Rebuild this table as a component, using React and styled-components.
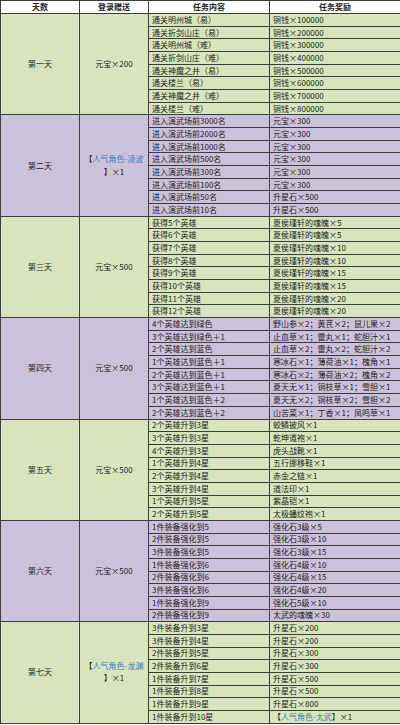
import React from "react";
import styled, { createGlobalStyle } from "styled-components";

const Global = createGlobalStyle`
  html, body { margin: 0; padding: 0; background: #ffffff; }
  body { font-family: "Noto Sans CJK SC", "Liberation Sans", sans-serif; }
`;

const TONES = {
  green: "#d7e4bd",
  purple: "#ccc1da",
  white: "#ffffff",
};

const Table = styled.div`
  display: grid;
  width: 400px;
  box-sizing: border-box;
  grid-template-columns: 79px 69px 121px 131px;
  grid-template-rows: 13px;
  grid-auto-rows: 12.68px;
  border-left: 1px solid #3c3c3c;
  border-top: 1px solid #3c3c3c;
  font-size: 8px;
  color: #1c1c1c;
`;

const Cell = styled.div`
  box-sizing: border-box;
  border-right: 1px solid #3c3c3c;
  border-bottom: 1px solid #3c3c3c;
  background: ${(p) => TONES[p.$tone || "white"]};
  display: flex;
  align-items: center;
  white-space: nowrap;
  overflow: hidden;
  line-height: 1;
`;

const HeadCell = styled(Cell)`
  justify-content: center;
  font-weight: 700;
  color: #222;
`;

const SpanCell = styled(Cell)`
  grid-row: span ${(p) => p.$span};
  grid-column: ${(p) => p.$col};
  justify-content: center;
  text-align: center;
`;

const Lines = styled.div`
  display: block;
  line-height: 12.5px;
  white-space: nowrap;
  text-align: center;
`;

const TextCell = styled(Cell)`
  padding-left: 3px;
`;

const Blue = styled.span`
  color: #3a7dc4;
`;

const Role = ({ name }) => (
  <span>
    【<Blue>人气角色-{name}</Blue>】×1
  </span>
);

const RoleWrapped = ({ name }) => (
  <Lines>
    【<Blue>人气角色-{name}</Blue>
    <br />】×1
  </Lines>
);

const days = [
  {
    label: "第一天",
    tone: "green",
    gift: "元宝×200",
    rows: [
      ["通关明州城（易）", "铜钱×100000"],
      ["通关折剑山庄（易）", "铜钱×200000"],
      ["通关明州城（难）", "铜钱×300000"],
      ["通关折剑山庄（难）", "铜钱×400000"],
      ["通关神魔之井（易）", "铜钱×500000"],
      ["通关楼兰（易）", "铜钱×600000"],
      ["通关神魔之井（难）", "铜钱×700000"],
      ["通关楼兰（难）", "铜钱×800000"],
    ],
  },
  {
    label: "第二天",
    tone: "purple",
    gift: <RoleWrapped name="凌波" />,
    rows: [
      ["进入演武场前3000名", "元宝×300"],
      ["进入演武场前2000名", "元宝×300"],
      ["进入演武场前1000名", "元宝×300"],
      ["进入演武场前500名", "元宝×300"],
      ["进入演武场前300名", "元宝×300"],
      ["进入演武场前100名", "元宝×300"],
      ["进入演武场前50名", "升星石×500"],
      ["进入演武场前10名", "升星石×500"],
    ],
  },
  {
    label: "第三天",
    tone: "green",
    gift: "元宝×500",
    rows: [
      ["获得5个英雄", "夏侯瑾轩的魂魄×5"],
      ["获得6个英雄", "夏侯瑾轩的魂魄×5"],
      ["获得7个英雄", "夏侯瑾轩的魂魄×10"],
      ["获得8个英雄", "夏侯瑾轩的魂魄×10"],
      ["获得9个英雄", "夏侯瑾轩的魂魄×15"],
      ["获得10个英雄", "夏侯瑾轩的魂魄×15"],
      ["获得11个英雄", "夏侯瑾轩的魂魄×20"],
      ["获得12个英雄", "夏侯瑾轩的魂魄×20"],
    ],
  },
  {
    label: "第四天",
    tone: "purple",
    gift: "元宝×500",
    rows: [
      ["4个英雄达到绿色", "野山参×2；黄芪×2；鼠儿果×2"],
      ["3个英雄达到绿色＋1", "止血草×1；雷丸×1；蛇胆汁×1"],
      ["2个英雄达到蓝色", "止血草×2；雷丸×2；蛇胆汁×2"],
      ["1个英雄达到蓝色＋1", "寒冰石×1；薄荷油×1；槐角×1"],
      ["2个英雄达到蓝色＋1", "寒冰石×2；薄荷油×2；槐角×2"],
      ["3个英雄达到蓝色＋1", "夏天无×1；铜枝草×1；雪胆×1"],
      ["1个英雄达到蓝色＋2", "夏天无×2；铜枝草×2；雪胆×2"],
      ["2个英雄达到蓝色＋2", "山苦菜×1；丁香×1；凤鸣草×1"],
    ],
  },
  {
    label: "第五天",
    tone: "green",
    gift: "元宝×500",
    rows: [
      ["2个英雄升到3星", "蛟鳞披风×1"],
      ["3个英雄升到3星", "乾坤道袍×1"],
      ["4个英雄升到3星", "虎头战靴×1"],
      ["1个英雄升到4星", "五行挪移鞋×1"],
      ["2个英雄升到4星", "赤金之链×1"],
      ["3个英雄升到4星", "道法印×1"],
      ["1个英雄升到5星", "紫晶铠×1"],
      ["2个英雄升到5星", "太极蟠纹袍×1"],
    ],
  },
  {
    label: "第六天",
    tone: "purple",
    gift: "元宝×500",
    rows: [
      ["1件装备强化到5", "强化石3级×5"],
      ["2件装备强化到5", "强化石3级×10"],
      ["3件装备强化到5", "强化石3级×15"],
      ["1件装备强化到6", "强化石4级×10"],
      ["2件装备强化到6", "强化石4级×15"],
      ["3件装备强化到6", "强化石4级×20"],
      ["1件装备强化到9", "强化石5级×10"],
      ["2件装备强化到9", "太武的魂魄×30"],
    ],
  },
  {
    label: "第七天",
    tone: "green",
    gift: <RoleWrapped name="龙渊" />,
    rows: [
      ["3件装备升到3星", "升星石×200"],
      ["3件装备升到4星", "升星石×200"],
      ["2件装备升到5星", "升星石×300"],
      ["2件装备升到6星", "升星石×300"],
      ["1件装备升到7星", "升星石×500"],
      ["1件装备升到8星", "升星石×500"],
      ["1件装备升到9星", "升星石×800"],
      ["1件装备升到10星", <Role name="太武" />],
    ],
  },
];

export default function App() {
  return (
    <>
      <Global />
      <Table>
        <HeadCell>天数</HeadCell>
        <HeadCell>登录赠送</HeadCell>
        <HeadCell>任务内容</HeadCell>
        <HeadCell>任务奖励</HeadCell>
        {days.map((d) => (
          <React.Fragment key={d.label}>
            <SpanCell $tone={d.tone} $span={d.rows.length} $col={1}>
              {d.label}
            </SpanCell>
            <SpanCell $tone={d.tone} $span={d.rows.length} $col={2}>
              {d.gift}
            </SpanCell>
            {d.rows.map((r, i) => (
              <React.Fragment key={i}>
                <TextCell $tone={d.tone}>{r[0]}</TextCell>
                <TextCell $tone={d.tone}>{r[1]}</TextCell>
              </React.Fragment>
            ))}
          </React.Fragment>
        ))}
      </Table>
    </>
  );
}
